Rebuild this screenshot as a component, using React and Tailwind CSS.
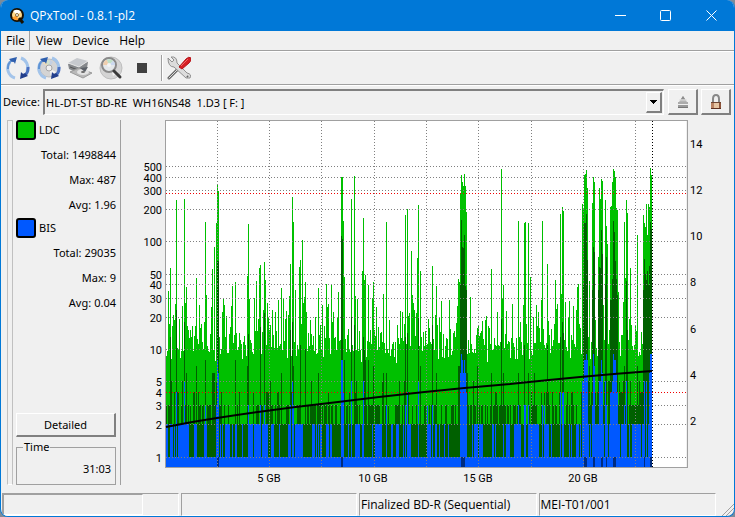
import { useState } from "react";

// chart area in svg units
const LEFT = 166;
const TOP = 121;
const RIGHT = 686;
const BOTTOM = 467;
const DATA_END = 652;

const ERROR_TICKS = [
  [500, 166], [400, 177], [300, 190], [200, 209], [100, 241],
  [50, 274], [40, 284], [30, 298], [20, 317], [10, 349],
  [5, 381], [4, 392], [3, 405], [2, 424], [1, 457],
];
const SPEED_TICKS = [[14, 144], [12, 190], [10, 236], [8, 282], [6, 329], [4, 375], [2, 421]];
const SIZE_GRID = [217, 269, 321, 374, 426, 478, 531, 583, 635];
const SIZE_TICKS = [[5, 269], [10, 373], [15, 478], [20, 583]];
const LIMITS = [193, 392];

// [x, top] pairs, bars grow up from the bottom
const LDC_MAX = [
  [168, 291], [170, 268], [176, 200], [184, 199], [186, 287], [196, 278], [205, 222], [212, 269],
  [214, 247], [216, 223], [217, 184], [218, 191], [232, 286], [235, 282], [247, 276], [248, 224],
  [256, 281], [259, 268], [260, 265], [264, 262], [265, 280], [281, 288], [290, 264], [292, 197],
  [293, 222], [295, 290], [299, 267], [300, 260], [302, 240], [305, 282], [318, 288], [326, 284],
  [331, 285], [338, 292], [341, 177], [342, 177], [343, 221], [344, 277], [351, 199], [354, 176],
  [362, 271], [363, 218], [364, 280], [365, 275], [368, 285], [373, 282], [383, 294], [386, 222],
  [405, 215], [407, 209], [411, 251], [417, 258], [418, 205], [420, 271], [432, 266], [436, 286],
  [458, 279], [459, 282], [460, 193], [461, 175], [462, 182], [463, 186], [464, 174], [465, 186],
  [466, 212], [491, 269], [501, 169], [503, 285], [518, 221], [524, 223], [525, 222], [528, 223],
  [530, 277], [542, 221], [547, 264], [555, 280], [560, 214], [561, 294], [562, 207], [563, 211],
  [577, 287], [578, 284], [582, 204], [583, 208], [584, 175], [585, 174], [586, 170], [587, 188],
  [589, 281], [592, 203], [593, 177], [594, 182], [598, 257], [599, 188], [600, 199], [601, 179],
  [602, 181], [605, 200], [606, 226], [607, 244], [610, 207], [611, 206], [612, 182], [613, 169],
  [614, 171], [615, 177], [616, 208], [617, 210], [618, 292], [624, 222], [625, 278], [626, 200],
  [627, 213], [630, 268], [637, 235], [643, 215], [644, 223], [645, 227], [646, 204], [647, 235],
  [648, 204], [649, 207], [650, 168], [651, 175],
];
const LDC_AVG = [
  [170, 337], [176, 310], [184, 322], [186, 373], [196, 366], [205, 360], [212, 373], [213, 373],
  [214, 373], [216, 382], [217, 261], [218, 261], [235, 360], [247, 366], [248, 334], [260, 327],
  [264, 313], [281, 373], [290, 330], [292, 322], [293, 366], [300, 345], [305, 349], [318, 373],
  [341, 236], [342, 239], [344, 360], [351, 317], [354, 325], [363, 337], [364, 350], [365, 360],
  [368, 360], [373, 366], [383, 373], [386, 373], [405, 337], [407, 333], [418, 318], [420, 366],
  [432, 325], [436, 373], [458, 366], [459, 366], [460, 285], [461, 220], [462, 247], [463, 248],
  [464, 235], [465, 286], [466, 290], [467, 373], [477, 366], [491, 373], [501, 319], [503, 373],
  [518, 373], [524, 345], [528, 373], [534, 373], [547, 345], [560, 337], [562, 322], [563, 333],
  [583, 285], [584, 223], [585, 223], [586, 214], [587, 260], [589, 366], [592, 290], [593, 247],
  [594, 252], [598, 290], [599, 267], [600, 268], [601, 230], [602, 254], [605, 285], [606, 257],
  [610, 300], [611, 300], [612, 279], [613, 221], [614, 232], [615, 261], [616, 279], [617, 295],
  [624, 366], [626, 281], [627, 330], [637, 366], [643, 290], [644, 259], [645, 274], [646, 280],
  [647, 271], [648, 285], [649, 266], [650, 222], [651, 229],
];
const BIS_MAX = [
  [176, 392], [184, 381], [205, 405], [216, 405], [217, 360], [218, 373], [248, 405], [260, 405],
  [264, 405], [290, 405], [292, 381], [293, 405], [341, 360], [342, 360], [343, 392], [351, 381],
  [363, 381], [386, 405], [405, 405], [407, 392], [418, 381], [427, 405], [432, 405], [460, 373],
  [461, 354], [462, 360], [463, 373], [464, 360], [465, 373], [466, 392], [518, 405], [524, 405],
  [525, 405], [528, 405], [542, 405], [544, 405], [560, 392], [562, 392], [563, 392], [582, 381],
  [583, 381], [584, 360], [585, 360], [586, 354], [587, 360], [592, 405], [593, 354], [594, 366],
  [599, 381], [600, 381], [601, 360], [602, 373], [605, 381], [606, 405], [610, 392], [611, 392],
  [612, 381], [613, 354], [614, 360], [615, 360], [616, 373], [617, 392], [624, 405], [626, 381],
  [644, 381], [646, 381], [649, 373], [650, 354], [651, 354],
];
const BIS_AVG = [[217, 2], [341, 2], [461, 4], [584, 3], [593, 2], [601, 2], [606, 1], [613, 3], [644, 1], [650, 2]];

function noise(seed) {
  let s = seed;
  return () => {
    s = (s * 1664525 + 1013904223) >>> 0;
    return s / 4294967296;
  };
}

function buildBars() {
  const rand = noise(97);
  const peaks = new Map(LDC_MAX);
  const avgs = new Map(LDC_AVG);
  const bis = new Map(BIS_MAX);
  const rows = { ldc: [], avg: [], bis: [] };
  let blueRun = false;
  for (let x = LEFT; x < DATA_END; x++) {
    const near = peaks.has(x - 1) || peaks.has(x + 1);
    const lift = -Math.log(1 - rand() * 0.96) * (near ? 36 : 23);
    const base = Math.round(364 - lift - rand() * 15);
    const level = rand();
    const dense = x > 582 ? 0.4 : 0;
    rows.ldc.push([x, peaks.get(x) ?? Math.max(base, 291 + Math.round(rand() * 16))]);
    const low = level < 0.03 + dense * 0.3 ? 381 : level < 0.14 + dense ? 392 : level < 0.5 + dense ? 405 : 424;
    rows.avg.push([x, avgs.get(x) ?? low]);
    // blue columns come in short runs
    if (rand() < 0.55) blueRun = rand() < (x > 582 ? 0.8 : x > 440 && x < 510 ? 0.22 : 0.42);
    rows.bis.push([x, bis.get(x) ?? (blueRun ? 424 : 457)]);
  }
  return rows;
}

const BARS = buildBars();
const toPath = (bars) => bars.map(([x, y]) => `M${x} ${y}h1V${BOTTOM}h-1z`).join("");

function Chart() {
  return (
    <svg viewBox="123 116 611 371" className="block w-full font-['Roboto',sans-serif]" role="img" aria-label="LDC / BIS error chart" fontSize="11">
      <rect x={LEFT} y={TOP} width={RIGHT - LEFT} height={BOTTOM - TOP} fill="#fff" />
      <g shapeRendering="crispEdges">
        <path d={toPath(BARS.ldc)} fill="#00c000" />
        <path d={toPath(BARS.avg)} fill="#006000" />
        <path d={toPath(BARS.bis)} fill="#0058ff" />
        {BIS_AVG.map(([x, w]) => (
          <rect key={x} x={x} y="457" width={w} height="10" fill="#002c80" />
        ))}
        <g stroke="#808080" strokeDasharray="1 2">
          {ERROR_TICKS.map(([v, y]) => (
            <path key={v} d={`M${LEFT} ${y}.5H${RIGHT}`} />
          ))}
          {SIZE_GRID.map((x) => (
            <path key={x} d={`M${x}.5 ${TOP}V${BOTTOM}`} />
          ))}
        </g>
        {LIMITS.map((y) => (
          <path key={y} d={`M${LEFT} ${y}.5H${RIGHT}`} stroke="#f00000" strokeDasharray="1 2" />
        ))}
        <path d={`M${DATA_END}.5 ${TOP}V${BOTTOM}`} stroke="#000" strokeDasharray="1 2" />
        <path d="M165.5 120.5H687.5V467.5H165.5Z" fill="none" stroke="#a0a0a0" />
      </g>
      <path d="M166 427Q190 422 217 418Q275 409 338 402Q425 391 510 384Q585 376 652 371" fill="none" stroke="#000" strokeWidth="2" />
      <g textAnchor="end">
        {ERROR_TICKS.map(([v, y]) => (
          <text key={v} x="162" y={y + 5}>{v}</text>
        ))}
      </g>
      <g>
        {SPEED_TICKS.map(([v, y]) => (
          <text key={v} x="690" y={y + 4}>{v}</text>
        ))}
      </g>
      <g textAnchor="middle">
        {SIZE_TICKS.map(([v, x]) => (
          <text key={v} x={x} y="482">{v} GB</text>
        ))}
      </g>
    </svg>
  );
}

function RefreshArrows() {
  return (
    <g fill="none">
      <path d="M9 22A10 10 0 0 1 4 6" stroke="#a3c4ea" strokeWidth="3" />
      <path d="M2 13A10 10 0 0 1 6 4" stroke="#5f93d4" strokeWidth="2" />
      <path d="M3 3L11 1L9 8Q8 5 6 6Z" fill="#2f5fae" />
      <path d="M15 2A10 10 0 0 1 21 15" stroke="#a3c4ea" strokeWidth="3" />
      <path d="M22 11A10 10 0 0 1 18 20" stroke="#4a6fc0" strokeWidth="3" />
      <path d="M22 20L14 23L15 16Q17 19 19 17Z" fill="#233f8c" />
    </g>
  );
}

function Disc({ r = 9 }) {
  return (
    <g>
      <circle cx="12" cy="12" r={r} fill="#d4d4d4" stroke="#bdbdbd" />
      <path d="M12 12L6 7L9 5Z" fill="#ecdcb8" />
      <path d="M12 12L9 5L13 4Z" fill="#cfe3cc" />
      <path d="M12 12L13 4L16 6Z" fill="#c3d0e4" />
      <path d="M12 12L19 16L14 20Z" fill="#f2f2f2" />
      <circle cx="12" cy="12" r="3" fill="#f0f0f0" stroke="#a4a4a4" />
    </g>
  );
}

const TOOLS = [
  ["Rescan bus", <RefreshArrows />],
  ["Update media info", <><Disc /><RefreshArrows /></>],
  ["Device info", (
    <g>
      <path d="M0 8L1 13L10 17L19 12L20 6Z" fill="#85888c" />
      <path d="M0 7L9 2L20 5L11 11Z" fill="#c6c9ce" />
      <path d="M0 7L11 11L20 5" fill="none" stroke="#e6e6e6" />
      <path d="M2 11L10 14" stroke="#555" />
      <path d="M2 16L11 12L24 17L15 22Z" fill="#b8b8b8" stroke="#9a9a9a" />
      <ellipse cx="15" cy="16" rx="6" ry="3" fill="#e2e2e2" />
      <path d="M12 12L20 11L17 16Z" fill="#5b6068" />
      <ellipse cx="15" cy="16" rx="2" ry="1" fill="#666" />
    </g>
  )],
  ["Start tests", (
    <g>
      <Disc r={11} />
      <circle cx="10" cy="9" r="7" fill="#e4e8ea" stroke="#8a8a8a" strokeWidth="2" />
      <path d="M4 9Q5 4 8 4L10 9Z" fill="#f0cfae" />
      <path d="M8 4Q11 2 14 5L10 9Z" fill="#bfe0c6" />
      <path d="M10 9L16 9Q16 6 14 5Z" fill="#cbd9ef" />
      <circle cx="10" cy="9" r="2" fill="#f4f4f4" />
      <path d="M15 15L21 21" stroke="#3a3a3a" strokeWidth="3" strokeLinecap="round" />
    </g>
  )],
  ["Stop tests", <path d="M7 7h10v10H7z" fill="#404040" />],
];

function PreferencesIcon() {
  return (
    <svg viewBox="0 0 24 24" className="size-6" aria-hidden="true">
      <path d="M2 22L12 12" stroke="#666" strokeWidth="3" strokeLinecap="round" />
      <path d="M2 22L12 12" stroke="#ddd" strokeLinecap="round" />
      <path d="M1 2L5 6L7 4L4 1Q10 0 10 7L20 17Q25 18 23 22L19 22L7 11Q1 11 1 2Z" fill="#dcdcdc" stroke="#909090" />
      <path d="M12 11L19 3Q22 0 24 2Q25 4 22 7L15 13Z" fill="#d81e24" stroke="#b0161a" />
      <path d="M14 10L21 3" stroke="#f06a6a" />
      <path d="M20 20L21 21" stroke="#666" strokeWidth="2" />
    </svg>
  );
}

function ColorRow({ label, swatch, stats }) {
  return (
    <section>
      <button className="flex h-5 items-center gap-[3px]">
        <span className={`size-5 rounded-[3px] border-2 border-black ${swatch}`} />
        {label}
      </button>
      <dl className="pt-0.5 pb-px">
        {stats.map(([k, v]) => (
          <div key={k} className="flex h-[25px] items-center justify-end gap-[3px]">
            <dt>{k}:</dt>
            <dd>{v}</dd>
          </div>
        ))}
      </dl>
    </section>
  );
}

const RAISED = "border-t border-l border-r-2 border-b-2 border-t-white border-l-white border-r-[#808080] border-b-[#808080]";
const SUNKEN = "border border-t-[#a0a0a0] border-l-[#a0a0a0] border-r-white border-b-white";

export default function App() {
  const [device, setDevice] = useState("F:");

  return (
    <div className="min-h-screen bg-[#7d8b99] font-['Noto_Sans','Open_Sans',sans-serif] text-[11px] leading-4 text-black">
      <div className="flex min-h-screen flex-col overflow-hidden rounded-lg border-x border-b border-[#0078d7] bg-[#f0f0f0]">
        {/* Title bar */}
        <header className="flex h-[31px] items-center bg-[#0078d7] pl-2 text-white">
          <svg viewBox="0 0 16 16" className="size-4" aria-hidden="true">
            <circle cx="8" cy="7" r="7" fill="#181000" />
            <circle cx="8" cy="7" r="5" fill="#ffd98a" />
            <path d="M8 7L4 3Q9 0 12 4Z" fill="#fff" />
            <path d="M8 7L3 10Q6 13 9 12Z" fill="#ff9d2e" />
            <circle cx="8" cy="7" r="1.500" fill="#fff" stroke="#8a6a30" />
            <path d="M10 10L14 15" stroke="#181000" strokeWidth="3" />
          </svg>
          <h1 className="grow pl-[5px] font-['Open_Sans',sans-serif] text-[12px]">QPxTool - 0.8.1-pl2</h1>
          <button aria-label="Minimize" className="grid h-full w-[46px] place-items-center">
            <svg viewBox="0 0 11 11" className="size-[11px]" stroke="#fff"><path d="M0 5.500H11" /></svg>
          </button>
          <button aria-label="Maximize" className="grid h-full w-[45px] place-items-center">
            <svg viewBox="0 0 11 11" className="size-[11px]" stroke="#fff" fill="none"><rect x="0.500" y="0.500" width="10" height="10" rx="1" /></svg>
          </button>
          <button aria-label="Close" className="grid h-full w-[46px] place-items-center">
            <svg viewBox="0 0 11 11" className="size-[11px]" stroke="#fff"><path d="M0.500 0.500L10.500 10.500M10.500 0.500L0.500 10.500" /></svg>
          </button>
        </header>

        {/* Menu */}
        <nav className="flex h-5 border-b border-[#a0a0a0] font-['Open_Sans',sans-serif] text-[12px]">
          <button className="border-r border-[#a0a0a0] pr-1 pl-[5px]">File</button>
          <button className="pr-[5px] pl-[6px]">View</button>
          <button className="px-[5px]">Device</button>
          <button className="px-[5px]">Help</button>
        </nav>

        {/* Toolbar */}
        <div className="flex h-[34px] items-center gap-[7px] border-t border-b border-t-white border-b-[#a0a0a0] pl-[5px]">
          {TOOLS.map(([name, icon]) => (
            <button key={name} aria-label={name}>
              <svg viewBox="0 0 24 24" className="size-6" aria-hidden="true">{icon}</svg>
            </button>
          ))}
          <span className="h-[26px] w-0.5 border-r border-l border-r-white border-l-[#a0a0a0]" />
          <button aria-label="Preferences" className="-ml-[3px]"><PreferencesIcon /></button>
        </div>

        {/* Device selector */}
        <div className="flex h-[33px] items-center gap-[3px] border-t border-white pr-[3px] pl-0.5">
          <label htmlFor="device" className="w-[37px] whitespace-nowrap">Device:</label>
          <div className="relative min-w-0 grow">
            <select
              id="device"
              value={device}
              onChange={(e) => setDevice(e.target.value)}
              className="block h-[26px] w-full appearance-none border-t-2 border-r border-b border-l-2 border-t-[#808080] border-r-white border-b-white border-l-[#808080] bg-[#f0f0f0] pl-px whitespace-pre"
            >
              <option value="F:">{"HL-DT-ST BD-RE\u00a0 WH16NS48\u00a0 1.D3 [ F: ]"}</option>
            </select>
            <span className={`pointer-events-none absolute top-[3px] right-0.5 grid h-[21px] w-4 place-items-center ${RAISED}`}>
              <svg viewBox="0 0 7 4" className="h-1 w-[7px]" shapeRendering="crispEdges"><path d="M0 0H7L4 4H3Z" /></svg>
            </span>
          </div>
          <button aria-label="Eject" className={`ml-px grid h-[26px] w-[30px] place-items-center bg-[#f0f0f0] ${RAISED}`}>
            <svg viewBox="0 0 16 16" className="size-4" aria-hidden="true">
              <path d="M8 2L12 8H4Z" fill="#b4b4b4" />
              <path d="M8 2L10 5H6Z" fill="#8c8c8c" />
              <path d="M4 6H12" stroke="#ddd" />
              <path d="M3 9H13" stroke="#666" />
              <rect x="3" y="11" width="10" height="2" fill="#999" />
              <path d="M3 13.500H13" stroke="#777" />
            </svg>
          </button>
          <button aria-label="Lock" className={`grid h-[26px] w-[30px] place-items-center bg-[#f0f0f0] ${RAISED}`}>
            <svg viewBox="0 0 16 16" className="size-4" aria-hidden="true">
              <path d="M5 9V5Q5 1 8 1Q11 1 11 5V9" fill="none" stroke="#888" strokeWidth="2" />
              <rect x="3" y="8" width="10" height="7" fill="#8c5238" />
              <path d="M3 8H7V15H3Z" fill="#b98262" />
              <path d="M6 9H11V14H6Z" fill="#e6c4a2" />
              <path d="M3 8.500H13" stroke="#6e4432" />
              <path d="M3 14.500H13" stroke="#5e3020" />
            </svg>
          </button>
        </div>

        <main className="flex grow gap-0.5 pt-0.5 pb-[8px] pl-[6px]">
          <div className="w-[6px] border-t border-r border-l border-[#c0c0c0] border-b border-b-white" />
          <aside className="flex w-[106px] shrink-0 flex-col border-r border-[#a0a0a0] pr-1 pl-px">
            <ColorRow label="LDC" swatch="bg-[#00c000]" stats={[["Total", "1498844"], ["Max", "487"], ["Avg", "1.96"]]} />
            <ColorRow label="BIS" swatch="bg-[#0058ff]" stats={[["Total", "29035"], ["Max", "9"], ["Avg", "0.04"]]} />
            <button className={`mt-auto h-6 w-full ${RAISED}`}>Detailed</button>
            <fieldset className="mt-0.5 h-[46px] border border-[#a0a0a0] px-1">
              <legend className="ml-0.5 px-px leading-4">Time</legend>
              <p className="pt-[6px] text-right">31:03</p>
            </fieldset>
          </aside>
          <div className="-mt-1 -mb-2 min-w-0 grow">
            <Chart />
          </div>
        </main>

        {/* Status bar */}
        <footer className="flex h-[23px] items-stretch gap-[2px] pl-px font-['Open_Sans',sans-serif] text-[12px]">
          <div className={`flex-1 ${SUNKEN}`}>
            <div className={`h-full w-4/5 ${SUNKEN}`} />
          </div>
          <div className={`flex-1 ${SUNKEN}`} />
          <div className={`flex flex-1 items-center pl-px whitespace-nowrap ${SUNKEN}`}>Finalized BD-R (Sequential)</div>
          <div className={`flex flex-1 items-center pl-px ${SUNKEN}`}>MEI-T01/001</div>
          <svg viewBox="0 0 16 22" className="h-[22px] w-4 self-end" stroke="#a0a0a0" aria-hidden="true">
            <path d="M4 22L16 10M8 22L16 14M12 22L16 18" />
          </svg>
        </footer>
      </div>
    </div>
  );
}
